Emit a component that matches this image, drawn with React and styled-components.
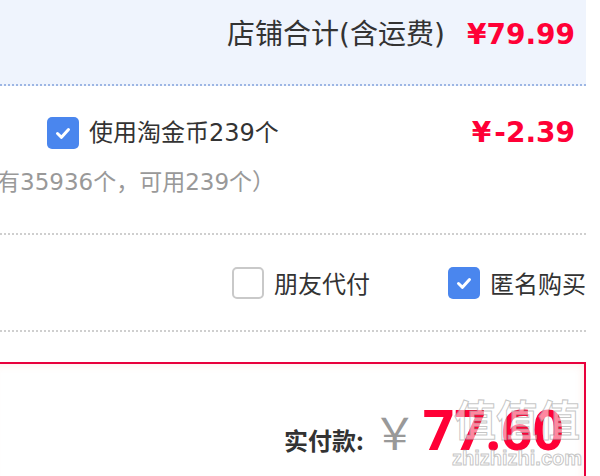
import styled, { createGlobalStyle } from "styled-components";

const GlobalStyle = createGlobalStyle`
  html, body {
    margin: 0;
    padding: 0;
    background: #fff;
  }
  body {
    font-family: "DejaVu Sans", "Noto Sans CJK SC", sans-serif;
  }
`;

const Page = styled.div`
  position: relative;
  width: 600px;
  height: 476px;
  overflow: hidden;
  background: #fff;
`;

const Column = styled.div`
  width: 586px;
`;

const ShopTotal = styled.div`
  height: 86px;
  box-sizing: border-box;
  padding: 14px 11px 0 0;
  background: #eff4fd;
  border-bottom: 2px dotted #9db6e4;
  display: flex;
  justify-content: flex-end;
  align-items: flex-start;
  gap: 22px;
  line-height: 42px;
`;

const TotalLabel = styled.span`
  font-size: 28px;
  color: #333;
`;

const Price = styled.span`
  font-weight: 700;
  font-size: 28px;
  color: #ff0036;
  white-space: pre;
`;

const Sign = styled.span`
  margin-right: 3px;
`;

const CoinsSection = styled.div`
  height: 149px;
  box-sizing: border-box;
  padding: 31px 11px 0 0;
  border-bottom: 2px dotted #cfcfcf;
`;

const CoinRow = styled.div`
  display: flex;
  justify-content: space-between;
  align-items: center;
  padding-left: 47px;
  height: 32px;
  line-height: 32px;
`;

const CheckLabel = styled.label`
  display: flex;
  align-items: center;
  gap: 10px;
  font-size: 24px;
  color: #333;
  white-space: nowrap;
`;

const Box = styled.span`
  display: inline-flex;
  align-items: center;
  justify-content: center;
  width: 32px;
  height: 32px;
  box-sizing: border-box;
  border-radius: 5px;
  background: ${(p) => (p.$checked ? "#4a86ee" : "#fff")};
  border: ${(p) => (p.$checked ? "none" : "2px solid #c9c9c9")};
`;

const CoinNote = styled.div`
  margin: 16px 0 0 -49px;
  font-size: 23px;
  line-height: 34px;
  color: #999;
  white-space: nowrap;
`;

const Options = styled.div`
  height: 97px;
  box-sizing: border-box;
  display: flex;
  justify-content: flex-end;
  align-items: center;
  gap: 78px;
  border-bottom: 2px dotted #cfcfcf;
`;

const PayBox = styled.div`
  margin: 30px 0 0 -10px;
  width: 596px;
  height: 140px;
  box-sizing: border-box;
  border: 2px solid #e8003c;
  box-shadow: inset 0 0 10px rgba(255, 90, 60, 0.14);
  display: flex;
  justify-content: flex-end;
  align-items: baseline;
  padding: 37px 20px 0 0;
  line-height: 1;
`;

const PayLabel = styled.span`
  font-family: "Noto Sans CJK SC", sans-serif;
  font-size: 24px;
  font-weight: 700;
  color: #333;
  margin-right: 9px;
`;

const Yen = styled.span`
  font-family: "Noto Sans CJK SC", sans-serif;
  font-size: 44px;
  color: #999;
  margin-right: 6px;
`;

const Amount = styled.span`
  font-family: "Noto Sans", sans-serif;
  font-size: 55px;
  font-weight: 700;
  color: #ff0036;
`;

const Watermark = styled.div`
  position: absolute;
  left: 452px;
  top: 390px;
  display: flex;
  flex-direction: column;
  align-items: center;
  pointer-events: none;
  color: rgba(255, 255, 255, 0.55);
  -webkit-text-stroke: 1px rgba(140, 140, 140, 0.5);
`;

const MarkGlyphs = styled.span`
  font-family: "Noto Sans CJK SC", sans-serif;
  font-size: 42px;
  font-weight: 700;
  line-height: 56px;
`;

const MarkSite = styled.span`
  font-family: "Liberation Sans", sans-serif;
  font-size: 20px;
  font-weight: 700;
  line-height: 24px;
`;

const Check = ({ checked }) => (
  <Box $checked={checked}>
    {checked && (
      <svg width="22" height="22" viewBox="0 0 22 22">
        <path
          d="M5.5 11.5l4 3.8L16.5 7.5"
          fill="none"
          stroke="#fff"
          strokeWidth="3"
          strokeLinecap="round"
          strokeLinejoin="round"
        />
      </svg>
    )}
  </Box>
);

export default function App() {
  return (
    <Page>
      <GlobalStyle />
      <Column>
        <ShopTotal>
          <TotalLabel>店铺合计(含运费)</TotalLabel>
          <Price>¥79.99</Price>
        </ShopTotal>

        <CoinsSection>
          <CoinRow>
            <CheckLabel>
              <Check checked />
              使用淘金币239个
            </CheckLabel>
            <Price>
              <Sign>¥</Sign>-2.39
            </Price>
          </CoinRow>
          <CoinNote>（共有35936个，可用239个）</CoinNote>
        </CoinsSection>

        <Options>
          <CheckLabel>
            <Check />
            朋友代付
          </CheckLabel>
          <CheckLabel>
            <Check checked />
            匿名购买
          </CheckLabel>
        </Options>

        <PayBox>
          <PayLabel>实付款:</PayLabel>
          <Yen>￥</Yen>
          <Amount>77.60</Amount>
        </PayBox>
      </Column>

      <Watermark>
        <MarkGlyphs>值值值</MarkGlyphs>
        <MarkSite>zhizhizhi.com</MarkSite>
      </Watermark>
    </Page>
  );
}
